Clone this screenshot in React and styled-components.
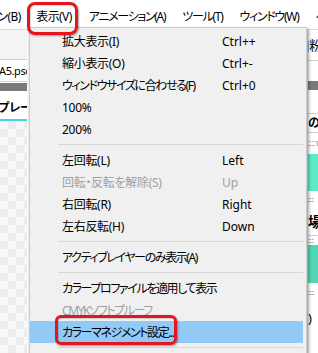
import React from "react";
import styled, { createGlobalStyle } from "styled-components";

const GlobalStyle = createGlobalStyle`
  body {
    margin: 0;
    background: #ffffff;
    font-family: "Noto Sans", "Noto Sans CJK JP", sans-serif;
  }
`;

const Screen = styled.div`
  position: relative;
  width: 318px;
  height: 353px;
  overflow: hidden;
  background: #ffffff;
  font-family: "Noto Sans", "Noto Sans CJK JP", sans-serif;
  font-feature-settings: "palt";
  font-size: 12px;
  color: #000;
`;

const MenuBar = styled.div`
  height: 29px;
  padding-top: 2px;
  box-sizing: border-box;
  display: flex;
  align-items: center;
  background: #ffffff;
  white-space: nowrap;
`;

const MenuBarItem = styled.div`
  padding: 0 8.5px;
  flex: none;
  letter-spacing: ${(p) => (p.$kana ? -1.3 : -0.6)}px;
  &:first-child {
    margin-left: -11px;
    padding-right: 7px;
  }
`;

const Workspace = styled.div`
  display: flex;
  height: 324px;
  border-top: 1px solid #dadada;
`;

const LeftPanel = styled.div`
  width: 27px;
  flex: none;
  display: flex;
  flex-direction: column;
  overflow: hidden;
  border-right: 1px solid #f8f8f8;
`;

const PanelHead = styled.div`
  height: 29px;
  flex: none;
  background: #f4f4f4;
  border-bottom: 1px solid #cfcfcf;
`;

const FileRow = styled.div`
  height: 21px;
  flex: none;
  display: flex;
  align-items: center;
  white-space: nowrap;
  font-size: 11px;
  letter-spacing: -0.4px;
  border-bottom: 1px solid #d4d4d4;
  text-indent: ${(p) => p.$indent || 0}px;
`;

const DarkBar = styled.div`
  height: 8px;
  flex: none;
  margin-top: 1px;
  background: #7a7a7a;
`;

const LayerRow = styled.div`
  height: 30px;
  flex: none;
  display: flex;
  align-items: center;
  padding-top: 2px;
  box-sizing: border-box;
  white-space: nowrap;
  font-weight: bold;
  font-family: "Noto Sans CJK JP", sans-serif;
  border-bottom: 2px solid #3fd6e2;
  text-indent: ${(p) => p.$indent || 0}px;
`;

const Checker = styled.div`
  flex: 1;
  background: repeating-conic-gradient(#ececec 0% 25%, #f8f8f8 0% 50%) 0 0 / 16px 16px;
`;

const Middle = styled.div`
  flex: 1;
  background: #f0f0f0;
`;

const RightPanel = styled.div`
  width: 10px;
  flex: none;
  display: flex;
  flex-direction: column;
  overflow: hidden;
  background: #ffffff;
  white-space: nowrap;
`;

const Strip = styled.div`
  height: ${(p) => p.$h}px;
  flex: none;
  display: flex;
  align-items: center;
  overflow: hidden;
  background: ${(p) => p.$bg || "transparent"};
  border-bottom: ${(p) => (p.$line ? "1px solid #cfcfcf" : "none")};
  font-size: ${(p) => p.$size || 12}px;
  font-weight: ${(p) => (p.$bold ? "bold" : "normal")};
  line-height: 1;
  text-indent: ${(p) => p.$indent || 0}px;
  color: ${(p) => p.$color || "#000"};
`;

const Dropdown = styled.div`
  position: absolute;
  left: 29px;
  top: 27px;
  width: 278px;
  height: 340px;
  box-sizing: border-box;
  padding: 2px 0;
  background: #f0f0f0;
  border: 1px solid #cccccc;
  box-shadow: 2px 2px 3px rgba(0, 0, 0, 0.35);
  z-index: 1;
`;

const Item = styled.div`
  height: 22px;
  margin-right: 3px;
  padding-left: 32px;
  display: grid;
  grid-template-columns: 160px 1fr;
  align-items: center;
  white-space: nowrap;
  background: ${(p) => (p.$active ? "#91c9f7" : "transparent")};
  color: ${(p) => (p.$disabled ? "#a0a0a0" : "#000")};
`;

const Label = styled.span`
  letter-spacing: ${(p) => (p.$kana ? -1.4 : -0.3)}px;
`;

const Separator = styled.div`
  height: 1px;
  margin: 4px 3px 4px 28px;
  background: #d7d7d7;
`;

const Callout = styled.div`
  position: absolute;
  left: ${(p) => p.$x}px;
  top: ${(p) => p.$y}px;
  width: ${(p) => p.$w}px;
  height: ${(p) => p.$h}px;
  box-sizing: border-box;
  border: 3px solid #e6141c;
  border-radius: ${(p) => p.$r}px;
  box-shadow: 1px 1px 2px rgba(0, 0, 0, 0.35), inset 1px 1px 1px rgba(0, 0, 0, 0.15);
  z-index: 2;
`;

const menus = [
  { label: "ン(B)" },
  { label: "表示(V)" },
  { label: "アニメーション(A)", kana: true },
  { label: "ツール(T)", kana: true },
  { label: "ウィンドウ(W)", kana: true },
  { label: "ヘルプ(H)", kana: true },
];

const groups = [
  [
    { label: "拡大表示(I)", key: "Ctrl++" },
    { label: "縮小表示(O)", key: "Ctrl+-" },
    { label: "ウィンドウサイズに合わせる(F)", key: "Ctrl+0", kana: true },
    { label: "100%" },
    { label: "200%" },
  ],
  [
    { label: "左回転(L)", key: "Left" },
    { label: "回転・反転を解除(S)", key: "Up", disabled: true },
    { label: "右回転(R)", key: "Right" },
    { label: "左右反転(H)", key: "Down" },
  ],
  [{ label: "アクティブレイヤーのみ表示(A)", kana: true }],
  [
    { label: "カラープロファイルを適用して表示", kana: true },
    { label: "CMYKソフトプルーフ", disabled: true, kana: true },
    { label: "カラーマネジメント設定...", active: true, kana: true },
  ],
];

const App = () => {
  return (
    <Screen>
      <GlobalStyle />
      <MenuBar>
        {menus.map((m) => (
          <MenuBarItem key={m.label} $kana={m.kana}>
            {m.label}
          </MenuBarItem>
        ))}
      </MenuBar>
      <Workspace>
        <LeftPanel>
          <PanelHead />
          <FileRow $indent={-1}>A5.psd</FileRow>
          <DarkBar />
          <LayerRow $indent={-2}>プレーン</LayerRow>
          <Checker />
        </LeftPanel>
        <Middle />
        <RightPanel>
          <Strip $h={30} $line $size={13} $indent={-3}>]粉</Strip>
          <Strip $h={20} $bg="#ffffff" />
          <Strip $h={9} $bg="#7a7a7a" />
          <Strip $h={23} $line />
          <Strip $h={18} $line $bold>の</Strip>
          <Strip $h={21} $size={7} $color="#777">ﾆﾆ1</Strip>
          <Strip $h={37} $bg="#5cebc9" />
          <Strip $h={18} $size={6} $color="#666">ﾆﾆ</Strip>
          <Strip $h={26} $line $size={14} $bold>場</Strip>
          <Strip $h={9} $size={6} $color="#666">ﾆﾆ</Strip>
          <Strip $h={38} $bg="#52d6b6" />
          <Strip $h={20} $size={6} $color="#666">ﾆﾆ</Strip>
          <Strip $h={30} $size={13}>)</Strip>
        </RightPanel>
      </Workspace>

      <Dropdown>
        {groups.map((g, gi) => (
          <React.Fragment key={gi}>
            {gi > 0 && <Separator />}
            {g.map((it) => (
              <Item key={it.label} $disabled={it.disabled} $active={it.active}>
                <Label $kana={it.kana}>{it.label}</Label>
                <span>{it.key || ""}</span>
              </Item>
            ))}
          </React.Fragment>
        ))}
        <Separator />
      </Dropdown>

      <Callout $x={27} $y={2} $w={51} $h={33} $r={8} />
      <Callout $x={55} $y={315} $w={122} $h={30} $r={6} />
    </Screen>
  );
};

export default App;
